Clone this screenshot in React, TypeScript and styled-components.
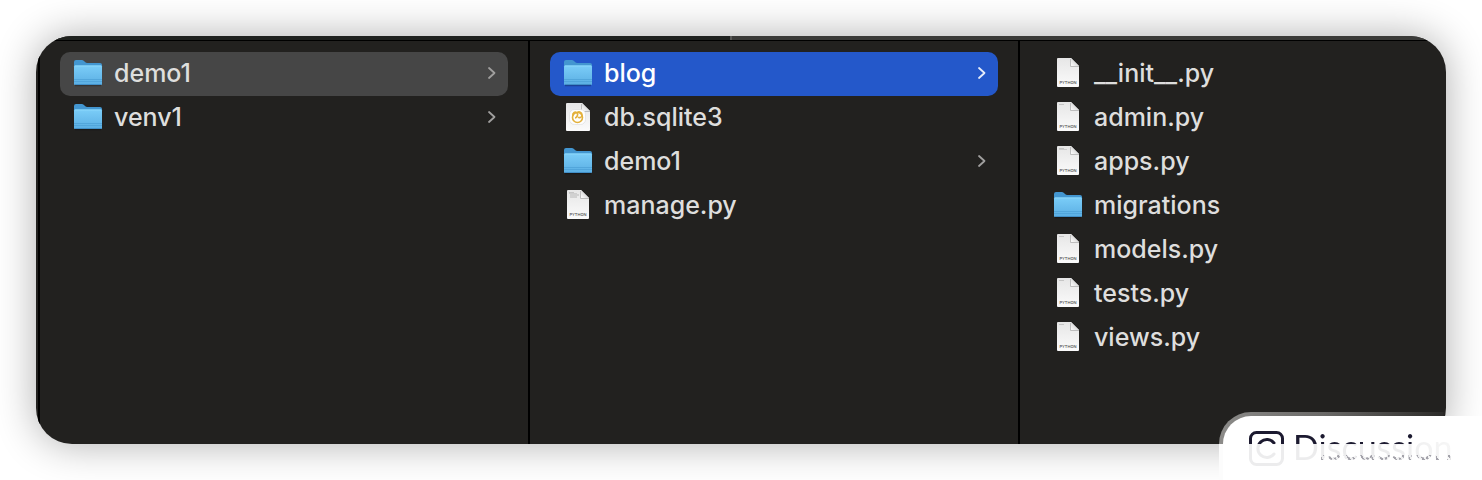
import React from "react";
import styled, { createGlobalStyle, css } from "styled-components";

const GlobalStyle = createGlobalStyle`
  * { box-sizing: border-box; }
  body { margin: 0; background: #fff; font-family: Inter, "Liberation Sans", sans-serif; }
`;

const Page = styled.div`
  position: relative;
  display: flex;
  min-height: 100vh;
  padding: 36px;
  overflow: hidden;
`;

const FinderWindow = styled.main`
  flex: 1;
  min-width: 0;
  display: flex;
  flex-direction: column;
  border-radius: 36px;
  overflow: hidden;
  background: #22211f;
  box-shadow: 0 0 40px rgba(0, 0, 0, 0.32);
`;

const TopEdge = styled.div`
  display: flex;
  height: 4px;
  background: #3b3b39;
`;

const SidebarEdge = styled.div`
  width: 696px;
  background: #1f221f;
  border-right: 2px solid #585856;
`;

const Browser = styled.div`
  flex: 1;
  display: flex;
  margin-left: 2px;
  border-top: 1px solid #000;
  border-left: 2px solid #000;
`;

const Column = styled.ul<{ $last?: boolean }>`
  list-style: none;
  margin: 0;
  padding: 11px 20px;
  ${({ $last }) =>
    $last
      ? css`flex: 1; min-width: 0;`
      : css`flex: 0 0 490px; border-right: 2px solid #000;`}
`;

type Tone = "plain" | "grey" | "blue";

const Entry = styled.button<{ $tone: Tone }>`
  display: flex;
  align-items: center;
  gap: 10px;
  width: 100%;
  height: 44px;
  padding: 0 10px 2px 12px;
  border: 0;
  border-radius: 10px;
  text-align: left;
  font: 500 25px/32px Inter, "Liberation Sans", sans-serif;
  color: ${({ $tone }) => ($tone === "blue" ? "#fff" : "#dededd")};
  background: ${({ $tone }) =>
    $tone === "blue" ? "#2458ca" : $tone === "grey" ? "#464646" : "transparent"};
  svg { flex: none; }
`;

const Name = styled.span`
  flex: 1;
  white-space: nowrap;
`;

const Watermark = styled.aside`
  position: absolute;
  right: 0;
  bottom: 0;
  width: 263px;
  height: 68px;
  padding: 4px 0 0 4px;
  border-radius: 32px 0 0 0;
  overflow: hidden;
  background:
    linear-gradient(#fcfcfc, #fcfcfc) 0 32px / 100% 36px no-repeat,
    linear-gradient(90deg, #8c8b89, #6a6967 40%, #2c2b29 85%, transparent 86%);
`;

const WatermarkPanel = styled.div`
  display: flex;
  align-items: flex-start;
  gap: 8px;
  height: 64px;
  padding: 14px 0 0 26px;
  border-radius: 28px 0 0 0;
  background: #fff;
`;

const WatermarkText = styled.span`
  font: 400 34px/34px Lato, "Liberation Sans", sans-serif;
  color: transparent;
  background:
    linear-gradient(#1c1a30, #1c1a30) 0 0 / 120px 14px no-repeat,
    repeating-linear-gradient(60deg, #a3a2aa 0 2px, transparent 2px 4px) 24px 25px / 140px 6px no-repeat,
    linear-gradient(90deg, #ececed 60%, #f6f6f6);
  background-clip: text;
  -webkit-background-clip: text;
`;

function Folder() {
  return (
    <svg width="32" height="32" viewBox="0 0 32 32" aria-hidden="true">
      <defs>
        <linearGradient id="folderFront" x2="0" y2="1">
          <stop offset="0" stopColor="#7bcdf8" />
          <stop offset="1" stopColor="#5aaee3" />
        </linearGradient>
      </defs>
      <path d="M3 28.500h26" stroke="#000" strokeOpacity=".25" strokeWidth="1.500" />
      <path d="M2 5q0-2 2-2h6c2 0 3 3 5 3h13q2 0 2 2v18H2z" fill="#4396d0" />
      <path d="M2 9.500q0-1 1-1h26q1 0 1 1V27q0 1-1 1H3q-1 0-1-1z" fill="url(#folderFront)" />
      <path d="M3 9h26" stroke="#8cd8fb" strokeWidth="1" />
      <path d="M2 22.500h28M2 24.500h28" stroke="#4b9fd5" strokeWidth=".7" />
      <path d="M3 27.500h26" stroke="#428fc7" />
    </svg>
  );
}

function Paper({ children, wide }: { children?: React.ReactNode; wide?: boolean }) {
  const l = wide ? 4 : 5;
  const r = wide ? 28 : 27;
  const top = wide ? 2 : 1;
  const bottom = 30;
  return (
    <svg width="32" height="32" viewBox="0 0 32 32" aria-hidden="true">
      <defs>
        <linearGradient id="paper" x2="0" y2="1">
          <stop offset="0" stopColor="#e6e6e6" />
          <stop offset="1" stopColor="#fbfbfb" />
        </linearGradient>
        <linearGradient id="fold" x1="0" y1="1" x2="1" y2="0">
          <stop offset="0" stopColor="#fff" />
          <stop offset=".5" stopColor="#dcdcdc" />
        </linearGradient>
      </defs>
      <path
        d={`M${l + 1} ${top}H${r - 8}L${r} ${top + 8}V${bottom - 1}q0 1-1 1H${l + 1}q-1 0-1-1V${top + 1}q0-1 1-1z`}
        fill="url(#paper)"
      />
      <path d={`M${r - 8.5} ${top + 1}V${top + 8.500}H${r}`} fill="none" stroke="#bdbdbd" />
      <path d={`M${r - 8} ${top}V${top + 7}q0 1 1 1H${r}z`} fill="url(#fold)" />
      {children}
    </svg>
  );
}

function PythonFile({ lines = 0 }: { lines?: number }) {
  return (
    <Paper>
      {lines > 0 && <path d="M7 3.500h5" stroke="#bcbcbc" strokeWidth=".8" />}
      {lines > 1 && <path d="M7 4.500h8" stroke="#c6c6c6" strokeWidth=".8" />}
      {lines > 2 && <path d="M8 6h9M8 8h7" stroke="#b8b8b8" />}
      <text
        x="16"
        y="27"
        textAnchor="middle"
        fontFamily="Inter, sans-serif"
        fontWeight="500"
        fontSize="4"
        fill="#4c4c4c"
      >
        PYTHON
      </text>
    </Paper>
  );
}

function DatabaseFile() {
  return (
    <Paper wide>
      <rect x="7.500" y="8.500" width="16" height="15" rx="5" fill="#fefefe" stroke="#dedede" strokeWidth=".7" />
      <g fill="none" stroke="#e3b13c" strokeWidth="1.600">
        <circle cx="15.500" cy="16.500" r="5" />
        <path d="M11 15c-1-3 2-5 4-3s-1 5-2 5" />
        <path d="M15 12c2-2 5-1 5 2s-3 3-4 2" />
      </g>
    </Paper>
  );
}

function Chevron({ bright }: { bright: boolean }) {
  return (
    <svg width="14" height="20" viewBox="0 0 14 20" aria-hidden="true">
      <path
        d="M5 5 10.500 10 5 15"
        fill="none"
        stroke={bright ? "#e6ecfa" : "#a09f9e"}
        strokeWidth="1.800"
        strokeLinecap="round"
        strokeLinejoin="round"
      />
    </svg>
  );
}

type Item = {
  name: string;
  kind: "folder" | "python" | "database";
  tone?: Tone;
  chevron?: boolean;
  lines?: number;
};

const columns: Item[][] = [
  [
    { name: "demo1", kind: "folder", tone: "grey", chevron: true },
    { name: "venv1", kind: "folder", chevron: true },
  ],
  [
    { name: "blog", kind: "folder", tone: "blue", chevron: true },
    { name: "db.sqlite3", kind: "database" },
    { name: "demo1", kind: "folder", chevron: true },
    { name: "manage.py", kind: "python", lines: 3 },
  ],
  [
    { name: "__init__.py", kind: "python" },
    { name: "admin.py", kind: "python", lines: 1 },
    { name: "apps.py", kind: "python", lines: 2 },
    { name: "migrations", kind: "folder" },
    { name: "models.py", kind: "python", lines: 1 },
    { name: "tests.py", kind: "python", lines: 1 },
    { name: "views.py", kind: "python", lines: 1 },
  ],
];

function ItemIcon({ item }: { item: Item }) {
  if (item.kind === "folder") return <Folder />;
  if (item.kind === "database") return <DatabaseFile />;
  return <PythonFile lines={item.lines} />;
}

export default function App() {
  return (
    <>
      <GlobalStyle />
      <Page>
        <FinderWindow>
          <TopEdge>
            <SidebarEdge />
          </TopEdge>
          <Browser>
            {columns.map((items, i) => (
              <Column key={i} $last={i === columns.length - 1}>
                {items.map((item) => (
                  <li key={item.name}>
                    <Entry type="button" $tone={item.tone ?? "plain"}>
                      <ItemIcon item={item} />
                      <Name>{item.name}</Name>
                      {item.chevron && <Chevron bright={item.tone === "blue"} />}
                    </Entry>
                  </li>
                ))}
              </Column>
            ))}
          </Browser>
        </FinderWindow>
        <Watermark>
          <WatermarkPanel>
            <svg width="36" height="36" viewBox="0 0 36 36" aria-hidden="true">
              <defs>
                <linearGradient id="markInk" gradientUnits="userSpaceOnUse" x1="0" y1="0" x2="0" y2="36">
                  <stop offset=".389" stopColor="#1c1a30" />
                  <stop offset=".389" stopColor="#ececed" />
                </linearGradient>
              </defs>
              <g fill="none" stroke="url(#markInk)" strokeWidth="3">
                <rect x="1.500" y="2.500" width="32" height="32" rx="6" />
                <path d="M25 13a9 9 0 1 0 0 11" strokeLinecap="round" />
              </g>
            </svg>
            <WatermarkText>Discussion</WatermarkText>
          </WatermarkPanel>
        </Watermark>
      </Page>
    </>
  );
}
